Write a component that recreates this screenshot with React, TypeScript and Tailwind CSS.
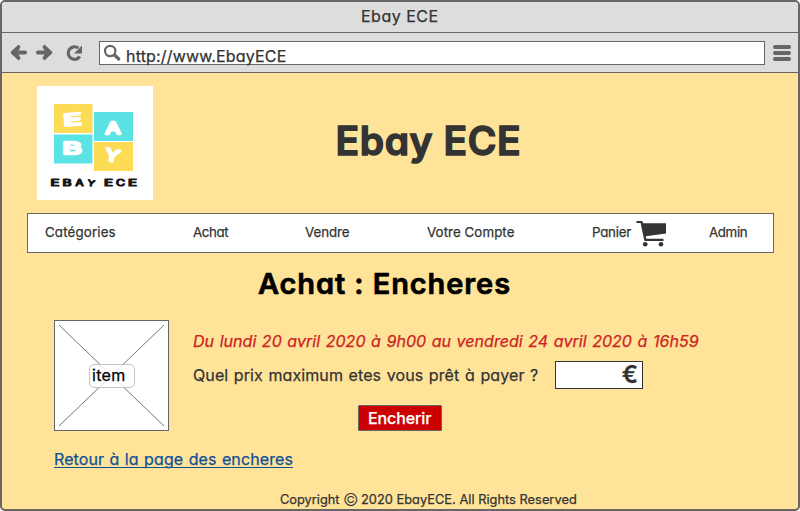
import React from "react";

function BrowserBar() {
  return (
    <div className="flex h-[39px] shrink-0 items-start">
      <svg className="ml-[7px] mt-[9px] h-[22px] w-[80px] shrink-0" viewBox="9 42 80 22" fill="none" stroke="#666666" strokeWidth="4" strokeLinecap="round">
        <path d="M14 52.5H25" />
        <path d="M18.5 45.5L19.8 47L16.8 52.5L19.8 58L18.5 59.5L11.5 53V52Z" fill="#666666" stroke="#666666" strokeWidth="1.4" strokeLinejoin="round" />
        <path d="M38 52.5H49" />
        <path d="M44.5 45.5L43.2 47L46.2 52.5L43.2 58L44.5 59.5L51.5 53V52Z" fill="#666666" stroke="#666666" strokeWidth="1.4" strokeLinejoin="round" />
        <path d="M79.8 56.5A6.3 6.3 0 1 1 78.3 48" strokeWidth="3.2" strokeLinecap="butt" />
        <path d="M82 45.5V53.5H74Z" fill="#666666" stroke="none" />
      </svg>
      <div className="ml-[10px] mt-[8px] flex h-[24px] w-[666px] shrink-0 border border-[#666666] bg-white">
        <svg className="ml-[3px] mt-[2px] h-[18px] w-[19px] shrink-0" viewBox="0 0 19 18" fill="none" stroke="#666666">
          <circle cx="7.2" cy="7" r="5.2" strokeWidth="2.2" />
          <path d="M11.5 11L15.8 15" strokeWidth="3.2" strokeLinecap="round" />
        </svg>
        <span className="ml-[4px] mt-[4px] text-[16px] leading-[20px] tracking-[0.17px]">http://www.EbayECE</span>
      </div>
      <div className="ml-[8px] mt-[12px] flex flex-col gap-[2px]">
        <div className="h-[4px] w-[18px] rounded-full bg-[#666666]" />
        <div className="h-[4px] w-[18px] rounded-full bg-[#666666]" />
        <div className="h-[4px] w-[18px] rounded-full bg-[#666666]" />
      </div>
    </div>
  );
}

function Logo() {
  return (
    <svg className="h-[114px] w-[116px] shrink-0 bg-white [-webkit-text-stroke:0]" viewBox="37 86 116 114">
      <rect x="54" y="104" width="38.5" height="29" fill="#fddc55" />
      <rect x="94" y="112" width="39" height="29" fill="#5ae2e4" />
      <rect x="54" y="134.5" width="38.5" height="29" fill="#5ae2e4" />
      <rect x="94" y="142" width="39" height="29" fill="#fddc55" />
      <g fill="white" stroke="white" strokeWidth="2.4" strokeLinejoin="round" fontWeight="400" fontSize="16">
        <text x="63.5" y="125.2" textLength="18" lengthAdjust="spacingAndGlyphs" transform="rotate(-5 72 120)">E</text>
        <text x="105.5" y="133.6" textLength="15" lengthAdjust="spacingAndGlyphs">A</text>
        <text x="62.5" y="153.7" textLength="19" lengthAdjust="spacingAndGlyphs">B</text>
        <text x="105" y="161.2" textLength="14.5" lengthAdjust="spacingAndGlyphs" transform="rotate(12 112 156)">Y</text>
      </g>
      <g fill="#151515" stroke="#151515" strokeWidth="1.1" strokeLinejoin="round" fontWeight="400" fontSize="8.5">
        <text x="50.5" y="186.2" textLength="9" lengthAdjust="spacingAndGlyphs">E</text>
        <text x="62.5" y="186.2" textLength="9" lengthAdjust="spacingAndGlyphs">B</text>
        <text x="75.5" y="186.2" textLength="8" lengthAdjust="spacingAndGlyphs">A</text>
        <text x="87.5" y="186.2" textLength="7.5" lengthAdjust="spacingAndGlyphs" transform="rotate(10 91 183)">Y</text>
        <text x="104" y="186.2" textLength="9" lengthAdjust="spacingAndGlyphs">E</text>
        <text x="116" y="186.2" textLength="9" lengthAdjust="spacingAndGlyphs">C</text>
        <text x="128" y="186.2" textLength="9" lengthAdjust="spacingAndGlyphs">E</text>
      </g>
    </svg>
  );
}

function Cart() {
  return (
    <svg className="-mt-px h-[26px] w-[31px] shrink-0" viewBox="0 0 31 26" fill="#333333">
      <path d="M0.5 0H6L7.4 2.2H30V12.6L9.8 15.3L10.2 17.8H27.5V20H8.4L4.6 2H0.5Z" />
      <circle cx="9.2" cy="23.2" r="2.3" />
      <circle cx="25" cy="23.2" r="2.3" />
    </svg>
  );
}

function Nav() {
  return (
    <nav className="ml-[25px] mt-[13px] flex h-[40px] w-[747px] shrink-0 items-start border border-[#666666] bg-white pl-[17px] pt-[8px] text-[13.3px] leading-[20px]">
      <span className="w-[148px] tracking-[0.16px]">Catégories</span>
      <span className="w-[112px] tracking-[-0.35px]">Achat</span>
      <span className="w-[122px] tracking-[-0.05px]">Vendre</span>
      <span className="w-[165px] tracking-[0.08px]">Votre Compte</span>
      <span className="w-[44px] tracking-[-0.25px]">Panier</span>
      <Cart />
      <span className="ml-[42px] tracking-[-0.35px]">Admin</span>
    </nav>
  );
}

function ItemPicture() {
  return (
    <div className="grid h-[111px] w-[115px] shrink-0 border border-[#666666] bg-white">
      <svg className="col-start-1 row-start-1 h-[109px] w-[113px]" viewBox="0 0 113 109" stroke="#777777" strokeWidth="1">
        <path d="M4 4L109 105M109 4L4 105" />
      </svg>
      <div className="col-start-1 row-start-1 ml-[34px] mt-[43px] h-[24px] w-[46px] rounded-[5px] border border-[#c4c4c4] bg-white/80 pl-[2px] text-[16px] leading-[21px] tracking-[0.3px] text-black">item</div>
    </div>
  );
}

export default function App() {
  return (
    <div className="h-[511px] w-[800px] bg-white">
      <div className="flex h-full w-full flex-col overflow-hidden whitespace-nowrap rounded-[5px] border-2 border-[#666666] bg-[#ffe399] font-['Inter','Liberation_Sans',sans-serif] text-[#333333] [font-feature-settings:'cv11','calt'_0] [-webkit-text-stroke:0.25px_currentColor]">
        <div className="flex h-[71px] shrink-0 flex-col border-b border-[#666666] bg-[#dddddd]">
          <div className="h-[31px] shrink-0 border-b border-[#666666] pl-[359px] pt-[4px] text-[16px] leading-[20px] tracking-[0.5px]">Ebay ECE</div>
          <BrowserBar />
        </div>
        <header className="flex shrink-0 pl-[35px] pt-[13px]">
          <Logo />
          <h1 className="ml-[182.5px] mt-[30px] text-[39px] font-semibold leading-[50px] tracking-[0.6px] [-webkit-text-stroke:1.4px_currentColor] [stroke-linejoin:round]">Ebay ECE</h1>
        </header>
        <Nav />
        <h2 className="ml-[256px] mt-[11px] h-[56px] shrink-0 text-[29px] font-semibold leading-[40px] tracking-[0.9px] text-black [-webkit-text-stroke:0.7px_currentColor] [stroke-linejoin:round]">Achat : Encheres</h2>
        <main className="flex shrink-0 pl-[52px]">
          <ItemPicture />
          <div className="ml-[24px] pt-[9px]">
            <p className="text-[16px] italic leading-[24px] tracking-[0.04px] text-[#cc2222] [word-spacing:1px]">Du lundi 20 avril 2020 à 9h00 au vendredi 24 avril 2020 à 16h59</p>
            <div className="mt-[8px] flex h-[28px] text-[16px] leading-[28px]">
              <span className="w-[362px] tracking-[0.09px] [word-spacing:1px]">Quel prix maximum etes vous prêt à payer ?</span>
              <div className="h-[28px] w-[88px] border border-[#333333] bg-white pr-[4px] text-right text-[24px] font-semibold leading-[26px]">€</div>
            </div>
            <button className="ml-[165px] mt-[16px] block h-[26px] w-[84px] rounded-[1px] border border-[#666666] bg-[#cc0000] pl-[9px] text-left text-[16px] font-medium leading-[24px] tracking-[-0.1px] text-white">Encherir</button>
          </div>
        </main>
        <div className="ml-[52px] mt-[16px] h-[43px] shrink-0 text-[16px] leading-[24px]">
          <a className="inline-block h-[21px] border-b border-[#0f5096] tracking-[0.1px] text-[#0f5096] [word-spacing:0.8px]">Retour à la page des encheres</a>
        </div>
        <footer className="flex pl-[278px] text-[12.8px] leading-[20px]">
          <span className="w-[63px]">Copyright</span>
          <span className="w-[18px] text-[17px] font-light leading-[20px] [-webkit-text-stroke:0]">©</span>
          <span className="tracking-[0.03px]">2020 EbayECE. All Rights Reserved</span>
        </footer>
      </div>
    </div>
  );
}
